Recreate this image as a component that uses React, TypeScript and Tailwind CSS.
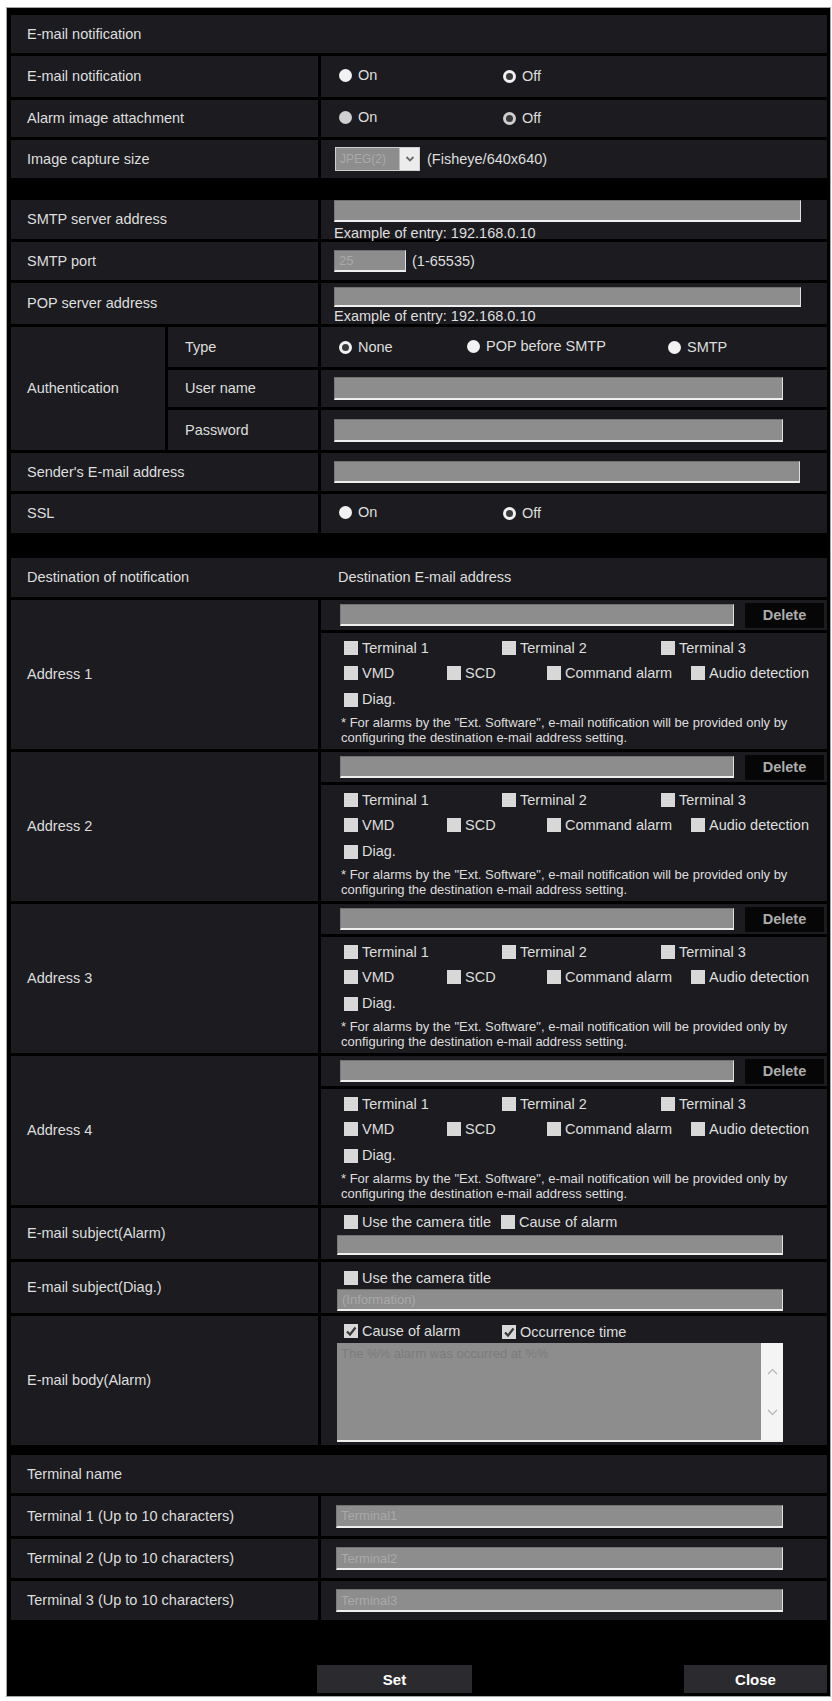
import React from "react";

// Shared cell colours
const CELL = "bg-[#1c1c20]";

function Radio({ checked, label, dim }: { checked?: boolean; label: string; dim?: boolean }) {
  return (
    <span className="inline-flex items-center gap-[6px]">
      <span
        className={`w-[13px] h-[13px] rounded-full flex items-center justify-center ${
          dim ? "bg-[#cfcfcf]" : "bg-[#f2f2f2]"
        }`}
      >
        {checked && <span className="w-[7px] h-[7px] rounded-full bg-[#3a3a3a]" />}
      </span>
      <span>{label}</span>
    </span>
  );
}

function Check({ checked, label }: { checked?: boolean; label: string }) {
  return (
    <span className="inline-flex items-center gap-[4px] whitespace-nowrap">
      <span className="w-[14px] h-[14px] bg-[#d8d8d8] flex items-center justify-center shrink-0">
        {checked && (
          <svg width="12" height="12" viewBox="0 0 12 12">
            <path d="M2 6.5 L5 9.5 L10.5 2.5" fill="none" stroke="#3a3a3a" strokeWidth="2.2" />
          </svg>
        )}
      </span>
      <span>{label}</span>
    </span>
  );
}

function Field({ w, h = 22, text }: { w: string; h?: number; text?: string }) {
  return (
    <div
      className={`${w} bg-[#8d8d8d] border-t border-l border-t-[#707070] border-l-[#7a7a7a] border-b-2 border-b-[#efefef] border-r border-r-[#dedede] text-[13px] text-[#a9a9a9] px-[4px] flex items-center shrink-0`}
      style={{ height: h }}
    >
      {text}
    </div>
  );
}

function Row({ label, h, children, valueClass = "" }: { label: string; h: string; children?: React.ReactNode; valueClass?: string }) {
  return (
    <div className={`flex gap-[3px] ${h}`}>
      <div className={`w-[307px] shrink-0 ${CELL} flex items-center pl-[16px]`}>{label}</div>
      <div className={`flex-1 ${CELL} ${valueClass}`}>{children}</div>
    </div>
  );
}

function AddressBlock({ n }: { n: number }) {
  return (
    <div className="flex gap-[3px] h-[149px]">
      <div className={`w-[307px] shrink-0 ${CELL} flex items-center pl-[16px]`}>Address {n}</div>
      <div className="flex-1 flex flex-col gap-[3px]">
        <div className={`h-[30px] ${CELL} flex items-center pl-[19px] pr-[2px]`}>
          <Field w="w-[394px]" />
          <div className="ml-[11px] w-[79px] h-[25px] bg-[#060606] text-[#adadad] font-bold flex items-center justify-center">
            Delete
          </div>
        </div>
        <div className={`flex-1 ${CELL} pl-[20px] pt-[4px]`}>
          <div className="flex h-[25px] items-center pl-[3px]">
            <div className="w-[158px]"><Check label="Terminal 1" /></div>
            <div className="w-[159px]"><Check label="Terminal 2" /></div>
            <div><Check label="Terminal 3" /></div>
          </div>
          <div className="flex h-[25px] items-center pl-[3px]">
            <div className="w-[103px]"><Check label="VMD" /></div>
            <div className="w-[100px]"><Check label="SCD" /></div>
            <div className="w-[144px]"><Check label="Command alarm" /></div>
            <div><Check label="Audio detection" /></div>
          </div>
          <div className="flex h-[25px] items-center pl-[3px]">
            <Check label="Diag." />
          </div>
          <p className="mt-[3px] text-[13px] leading-[15px]">
            * For alarms by the "Ext. Software", e-mail notification will be provided only by
            <br />
            configuring the destination e-mail address setting.
          </p>
        </div>
      </div>
    </div>
  );
}

export default function App() {
  return (
    <div className="font-['Liberation_Sans',Arial,sans-serif] text-[14.5px] text-[#dedede] leading-none">
      <div className="mt-[7px] ml-[6px] w-[825px] border border-[#a5a5a5] bg-black pt-[7px] pl-[4px] pr-[3px] pb-[3px] flex flex-col gap-[3px]">
        {/* E-mail notification */}
        <div className={`h-[38px] ${CELL} flex items-center pl-[16px]`}>E-mail notification</div>
        <Row label="E-mail notification" h="h-[41px]" valueClass="flex items-center pl-[18px]">
          <div className="w-[164px]"><Radio label="On" /></div>
          <Radio label="Off" checked />
        </Row>
        <Row label="Alarm image attachment" h="h-[37px]" valueClass="flex items-center pl-[18px]">
          <div className="w-[164px]"><Radio label="On" dim /></div>
          <Radio label="Off" checked dim />
        </Row>
        <Row label="Image capture size" h="h-[38px]" valueClass="flex items-center pl-[14px]">
          <div className="w-[85px] h-[24px] border border-[#cfcfcf] bg-[#8d8d8d] flex">
            <span className="flex-1 text-[12px] text-[#aaaaaa] flex items-center pl-[4px]">JPEG(2)</span>
            <span className="w-[20px] bg-[#ececec] border-l border-[#bdbdbd] flex items-center justify-center">
              <svg width="10" height="8" viewBox="0 0 10 8">
                <path d="M1.5 2 L5 5.5 L8.5 2" fill="none" stroke="#6a6a6a" strokeWidth="1.8" />
              </svg>
            </span>
          </div>
          <span className="ml-[7px]">(Fisheye/640x640)</span>
        </Row>
        <div className="h-[16px]" />

        {/* SMTP */}
        <Row label="SMTP server address" h="h-[39px]" valueClass="flex flex-col pl-[13px] pr-[26px]">
          <Field w="w-full" />
          <span className="mt-[4px] leading-[14px]">Example of entry: 192.168.0.10</span>
        </Row>
        <Row label="SMTP port" h="h-[38px]" valueClass="flex items-center pl-[13px]">
          <Field w="w-[72px]" text="25" />
          <span className="ml-[6px]">(1-65535)</span>
        </Row>
        <Row label="POP server address" h="h-[41px]" valueClass="flex flex-col pl-[13px] pr-[26px] pt-[4px]">
          <Field w="w-full" h={20} />
          <span className="mt-[2px] leading-[14px]">Example of entry: 192.168.0.10</span>
        </Row>
        <div className="flex gap-[3px] h-[123px]">
          <div className={`w-[154px] shrink-0 ${CELL} flex items-center pl-[16px]`}>Authentication</div>
          <div className="flex-1 flex flex-col gap-[3px]">
            <div className="flex gap-[3px] h-[40px]">
              <div className={`w-[150px] shrink-0 ${CELL} flex items-center pl-[17px]`}>Type</div>
              <div className={`flex-1 ${CELL} flex items-center pl-[18px]`}>
                <div className="w-[128px]"><Radio label="None" checked /></div>
                <div className="w-[201px]"><Radio label="POP before SMTP" /></div>
                <Radio label="SMTP" />
              </div>
            </div>
            <div className="flex gap-[3px] h-[37px]">
              <div className={`w-[150px] shrink-0 ${CELL} flex items-center pl-[17px]`}>User name</div>
              <div className={`flex-1 ${CELL} flex items-center pl-[13px]`}>
                <Field w="w-[449px]" h={23} />
              </div>
            </div>
            <div className="flex gap-[3px] h-[40px]">
              <div className={`w-[150px] shrink-0 ${CELL} flex items-center pl-[17px]`}>Password</div>
              <div className={`flex-1 ${CELL} flex items-center pl-[13px]`}>
                <Field w="w-[449px]" h={23} />
              </div>
            </div>
          </div>
        </div>
        <Row label="Sender's E-mail address" h="h-[38px]" valueClass="flex items-center pl-[13px]">
          <Field w="w-[466px]" />
        </Row>
        <Row label="SSL" h="h-[39px]" valueClass="flex items-center pl-[18px]">
          <div className="w-[164px]"><Radio label="On" /></div>
          <Radio label="Off" checked />
        </Row>
        <div className="h-[19px]" />

        {/* Destinations */}
        <div className={`h-[39px] ${CELL} flex items-center pl-[16px]`}>
          <span className="w-[311px]">Destination of notification</span>
          <span>Destination E-mail address</span>
        </div>
        <AddressBlock n={1} />
        <AddressBlock n={2} />
        <AddressBlock n={3} />
        <AddressBlock n={4} />

        <Row label="E-mail subject(Alarm)" h="h-[51px]" valueClass="flex flex-col pl-[16px] pt-[4px]">
          <div className="h-[20px] flex items-center pl-[7px] gap-[10px]">
            <Check label="Use the camera title" />
            <Check label="Cause of alarm" />
          </div>
          <div className="mt-[3px]"><Field w="w-[446px]" h={20} /></div>
        </Row>
        <Row label="E-mail subject(Diag.)" h="h-[51px]" valueClass="flex flex-col pl-[16px] pt-[6px]">
          <div className="h-[20px] flex items-center pl-[7px]">
            <Check label="Use the camera title" />
          </div>
          <div className="mt-[1px]"><Field w="w-[446px]" text="(Information)" /></div>
        </Row>
        <Row label="E-mail body(Alarm)" h="h-[129px]" valueClass="flex flex-col pl-[16px] pt-[6px]">
          <div className="h-[20px] flex items-center pl-[7px]">
            <div className="w-[158px]"><Check label="Cause of alarm" checked /></div>
            <Check label="Occurrence time" checked />
          </div>
          <div className="mt-[1px] w-[446px] h-[99px] flex border-b-2 border-b-[#efefef]">
            <div className="flex-1 bg-[#8d8d8d] text-[13px] text-[#7c7c7c] pl-[4px] pt-[4px]">
              The %% alarm was occurred at %%
            </div>
            <div className="w-[22px] bg-[#f4f4f4] flex flex-col items-center justify-center gap-[34px]">
              <svg width="11" height="7" viewBox="0 0 11 7">
                <path d="M1 6 L5.5 1.5 L10 6" fill="none" stroke="#b4b4b4" strokeWidth="1.2" />
              </svg>
              <svg width="11" height="7" viewBox="0 0 11 7">
                <path d="M1 1 L5.5 5.5 L10 1" fill="none" stroke="#b4b4b4" strokeWidth="1.2" />
              </svg>
            </div>
          </div>
        </Row>
        <div className="h-[4px]" />

        {/* Terminal names */}
        <div className={`h-[38px] ${CELL} flex items-center pl-[16px]`}>Terminal name</div>
        <Row label="Terminal 1 (Up to 10 characters)" h="h-[40px]" valueClass="flex items-center pl-[15px]">
          <Field w="w-[447px]" h={23} text="Terminal1" />
        </Row>
        <Row label="Terminal 2 (Up to 10 characters)" h="h-[39px]" valueClass="flex items-center pl-[15px]">
          <Field w="w-[447px]" h={23} text="Terminal2" />
        </Row>
        <Row label="Terminal 3 (Up to 10 characters)" h="h-[39px]" valueClass="flex items-center pl-[15px]">
          <Field w="w-[447px]" h={23} text="Terminal3" />
        </Row>
        <div className="h-[39px]" />

        <div className="flex h-[28px]">
          <div className="w-[306px]" />
          <button className="w-[155px] h-full bg-[#2b2b2f] text-white font-bold text-[15px]">Set</button>
          <div className="flex-1" />
          <button className="w-[143px] h-full bg-[#2b2b2f] text-white font-bold text-[15px]">Close</button>
        </div>
      </div>
    </div>
  );
}
